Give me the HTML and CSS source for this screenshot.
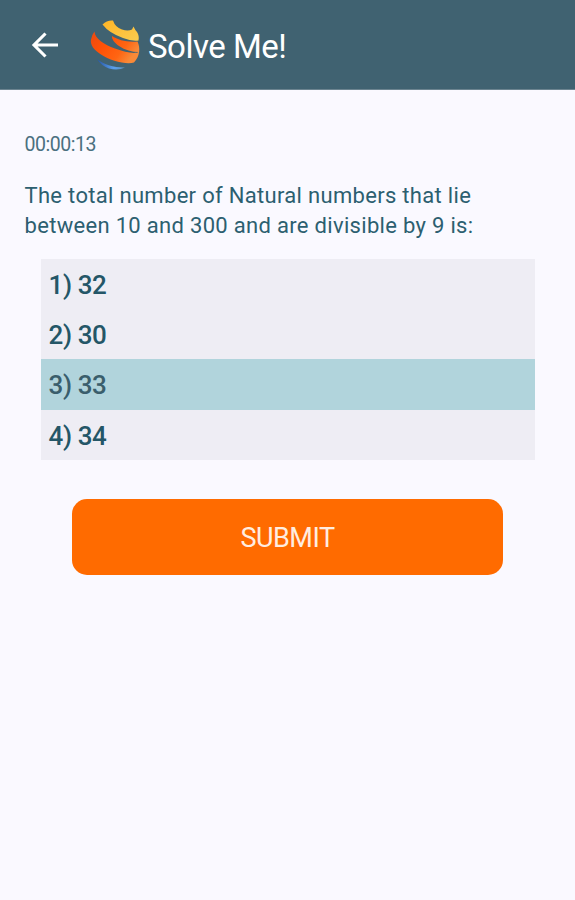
FILE: index.html
```html
<!DOCTYPE html>
<html lang="en">
<head>
<meta charset="utf-8">
<title>Solve Me!</title>
<link rel="stylesheet" href="styles.css">
</head>
<body>
<header class="bar">
  <svg class="back" viewBox="0 0 28 28" width="28" height="28" fill="none" stroke="#fff" stroke-width="3.1"><path d="M27 14H4M14.500 2.500 3 14 14.500 25.500"/></svg>
  <svg class="logo" viewBox="0 0 52 52" width="52" height="52">
    <defs>
      <linearGradient id="gold" x1="0" y1="0" x2="1" y2="1"><stop offset="0" stop-color="#ffb526"/><stop offset="1" stop-color="#f9cc50"/></linearGradient>
      <linearGradient id="fire" x1="0" y1="0" x2="1" y2=".5"><stop offset="0" stop-color="#e84a12"/><stop offset=".4" stop-color="#ff5208"/><stop offset=".75" stop-color="#ff6512"/><stop offset="1" stop-color="#f98a38"/></linearGradient>
      <linearGradient id="sky"><stop offset="0" stop-color="#2454a4"/><stop offset=".6" stop-color="#5ba0ee"/><stop offset="1" stop-color="#5c91b8"/></linearGradient>
    </defs>
    <path fill="url(#gold)" d="M13.500 5.500Q18 1 24 1.500Q26 8 33 10.500Q39 12.500 43 10.500L44.500 7.500Q46 11 48 13Q50.500 17 49.500 21.500Q43 22.500 34 19Q20 14 13.500 5.500Z"/>
    <path fill="url(#fire)" d="M5.500 12.500C6 20 15 25.500 26 29.500C36 33.500 46 35 49.500 33C43 33 36 31 30 27C25 23.500 22.500 19.500 23 17C29 21 38 23.500 48.500 22.500C51.500 29 51 37 45 43.500C38 46 21 42 12 35.500C5 31 1 26 2 20.500Q3 15.500 5.500 12.500Z"/>
    <path fill="url(#sky)" d="M8 40C14 45 24 48.500 36 48.500Q29 52 20 49.500Q12 46.500 8 40Z"/>
  </svg>
  <h1 class="title">Solve Me!</h1>
</header>
<main class="content">
  <div class="timer">00:00:13</div>
  <p class="question">The total number of Natural numbers that lie<br>between 10 and 300 and are divisible by 9 is:</p>
  <ul class="options">
    <li class="option">1) 32</li>
    <li class="option">2) 30</li>
    <li class="option selected">3) 33</li>
    <li class="option">4) 34</li>
  </ul>
  <button class="submit">SUBMIT</button>
</main>
</body>
</html>
```
FILE: styles.css
```css
* { box-sizing: border-box; }
body {
  margin: 0;
  min-height: 900px;
  background: #faf9ff;
  color: #2c5f70;
  font-family: Roboto, "Liberation Sans", sans-serif;
}
.bar {
  display: flex;
  align-items: center;
  height: 90px;
  padding-left: 31px;
  background: #406271;
  border-bottom: 1px solid #6c8490;
  color: #fff;
}
.back { flex: none; margin-top: 1px; }
.logo { flex: none; margin-left: 30px; }
.title {
  margin: 5px 0 0 7px;
  font-size: 33px;
  line-height: 40px;
  font-weight: 400;
  letter-spacing: -0.5px;
}
.content { padding: 43px 40px 0 24.5px; }
.timer { font-size: 19.5px; line-height: 24px; letter-spacing: -0.45px; color: #4a7080; }
.question {
  margin: 24px 0 0;
  font-size: 22px;
  line-height: 30px;
  letter-spacing: 0.31px;
  white-space: nowrap;
}
.options {
  margin: 18px 0 0 16px;
  padding: 0;
  list-style: none;
  background: #eeedf4;
}
.option {
  height: 50.2px;
  padding-left: 8px;
  font-size: 26px;
  line-height: 52.4px;
  font-weight: 500;
  letter-spacing: -0.4px;
  color: #245667;
}
.selected { background: #b1d4dc; color: #3a5e6c; }
.submit {
  display: block;
  width: 431px;
  height: 75.5px;
  margin: 39.7px 0 0 47.5px;
  padding: 2px 0 0;
  border: 0;
  border-radius: 15px;
  background: #ff6b00;
  color: #ffede0;
  font: 400 27px/32px Roboto, "Liberation Sans", sans-serif;
  letter-spacing: -0.5px;
}
```
